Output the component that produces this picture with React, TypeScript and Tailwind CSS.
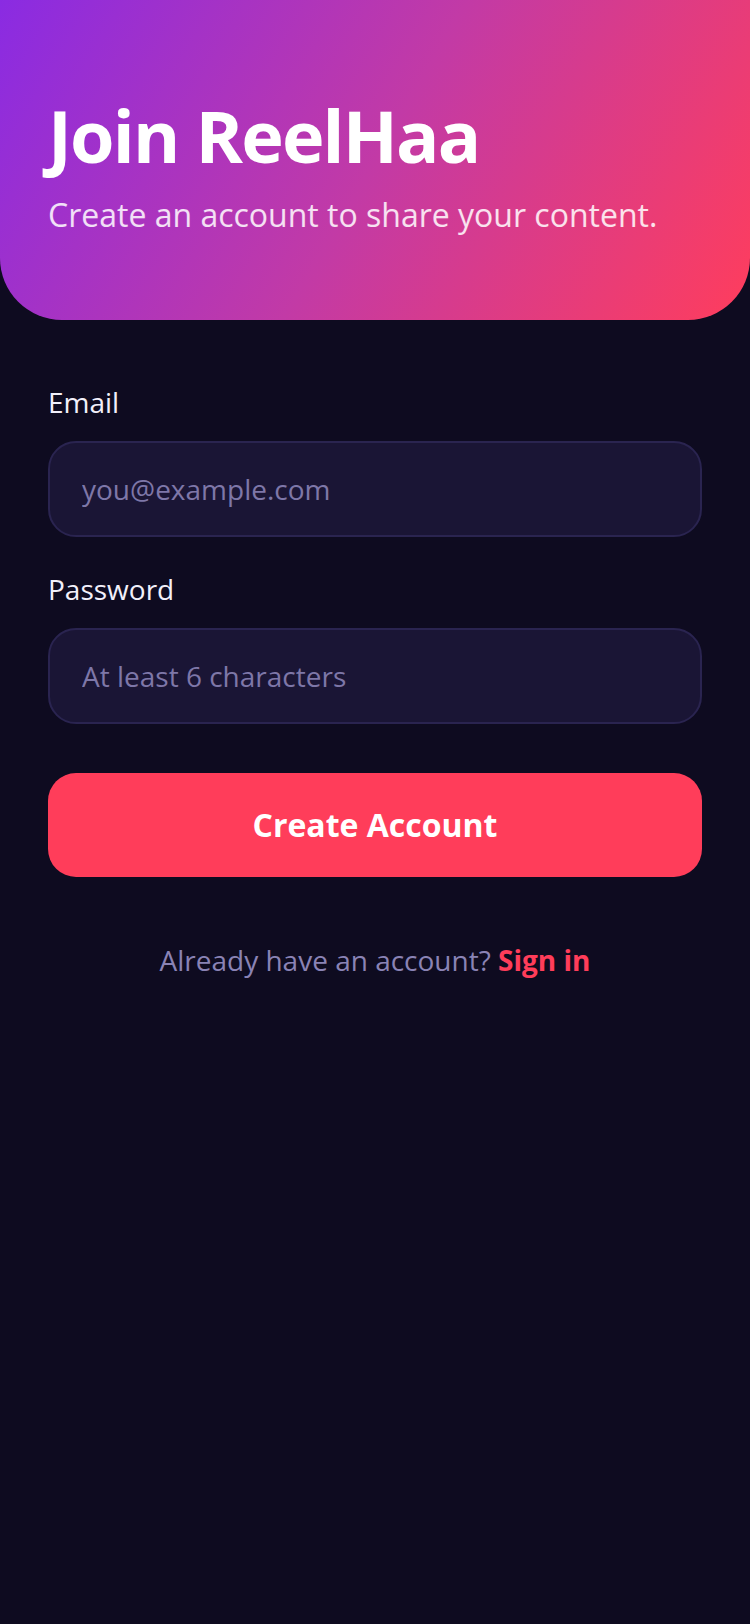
export default function App() {
  return (
    <div className="min-h-[1624px] w-full bg-[#0e0b20] font-['Open_Sans','Noto_Sans',sans-serif]">
      <header className="rounded-b-[62px] bg-[linear-gradient(120deg,#8a2be2_0%,#c23aa6_50%,#ff3d5c_100%)] px-12 pt-[99px] pb-[87px]">
        <h1 className="text-[72px] font-bold leading-none tracking-tight text-white">
          Join ReelHaa
        </h1>
        <p className="mt-[26px] text-[32px] leading-[36px] text-white/85">
          Create an account to share your content.
        </p>
      </header>

      <main className="px-12 pt-[62px]">
        <div className="mb-8">
          <label className="mb-[19px] block text-[28px] leading-[40px] text-[#f2f0fa]">
            Email
          </label>
          <input
            type="email"
            placeholder="you@example.com"
            className="h-[96px] w-full rounded-[28px] border-2 border-[#2a2450] bg-[#1a1535] px-8 text-[28px] text-white outline-none placeholder:text-[#7e77a8]"
          />
        </div>

        <div>
          <label className="mb-[19px] block text-[28px] leading-[40px] text-[#f2f0fa]">
            Password
          </label>
          <input
            type="password"
            placeholder="At least 6 characters"
            className="h-[96px] w-full rounded-[28px] border-2 border-[#2a2450] bg-[#1a1535] px-8 text-[28px] text-white outline-none placeholder:text-[#7e77a8]"
          />
        </div>

        <button className="mt-[49px] flex h-[104px] w-full items-center justify-center rounded-[28px] bg-[#ff3d5a] text-[32px] font-bold text-white">
          Create Account
        </button>

        <p className="mt-[63px] text-center text-[28px] leading-[40px] text-[#8a83b5]">
          Already have an account?{" "}
          <span className="font-bold text-[#ff3d5a]">Sign in</span>
        </p>
      </main>
    </div>
  );
}
